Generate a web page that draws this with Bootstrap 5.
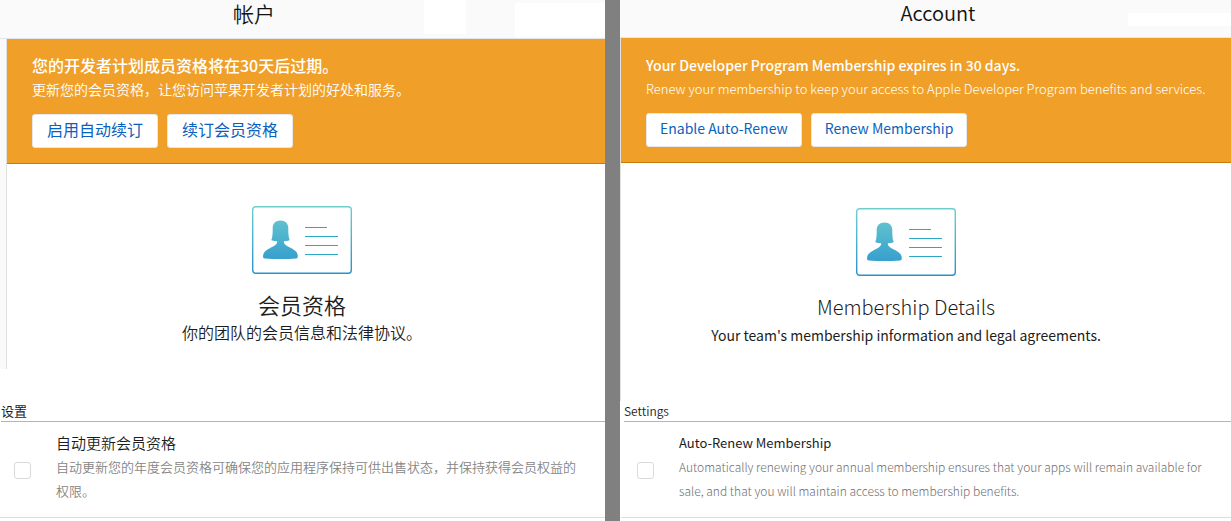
<!DOCTYPE html>
<html lang="zh-CN">
<head>
<meta charset="utf-8">
<meta name="viewport" content="width=device-width, initial-scale=1">
<title>帐户 / Account</title>
<link href="https://cdn.jsdelivr.net/npm/bootstrap@5.3.0/dist/css/bootstrap.min.css" rel="stylesheet">
<style>
  body { font-family: "Noto Sans CJK SC", sans-serif; color: #1c1c1c; background: #fff; }
  .panes { min-height: 100vh; }
  .pane { flex: 1 1 0; }
  .pane-zh { flex-grow: 605; }
  .pane-en { flex-grow: 611; }
  .divider { flex: 0 0 15px; background: #808080; }

  .topbar { height: 38px; background: #fafafa; border-bottom: 1px solid #e3e5e8; }
  .pane-zh .topbar { height: 39px; padding-right: 97px; }
  .pane-en .topbar { padding-left: 25px; }
  .topbar h1 { font-size: 21px; line-height: 26px; font-weight: 350; color: #111; }
  .pane-en .topbar h1 { font-size: 20px; }
  .blank { position: absolute; background: #fff; }
  .blank-a { right: 139px; top: 0; width: 42px; height: 34px; }
  .blank-b { right: 0; top: 3px; width: 90px; height: 34px; }
  .blank-c { right: 0; top: 13px; width: 103px; height: 13px; }

  .pane-zh .main-area { border-left: 1px solid #e0e0e0; margin-left: 6px; height: 330px; }
  .pane-zh .gutter { background: #fafafa; }
  .pane-en .main-area { border-left: 1px solid #e0e0e0; height: 363px; }
  .notice { background: #f0a028; border-bottom: 1px solid #c47d0b; color: #fff; padding: 14px 25px; height: 125px; }
  .notice h2 { font-size: 16px; line-height: 24px; font-weight: 500; }
  .notice p { font-size: 14px; line-height: 24px; font-weight: 350; }
  .pane-en .notice h2 { font-size: 14px; line-height: 26px; }
  .pane-en .notice p { font-size: 13px; line-height: 22px; font-weight: 300; }
  .btn-notice { --bs-btn-color: #0a62bd; --bs-btn-bg: #fff; --bs-btn-border-color: #e6e6ee;
    --bs-btn-hover-color: #0a4f99; --bs-btn-hover-bg: #f4f8fc; --bs-btn-border-radius: 3px;
    --bs-btn-font-size: 16px; --bs-btn-line-height: 24px; --bs-btn-padding-x: 14px; --bs-btn-padding-y: 2px;
    height: 34px; display: flex; align-items: flex-start; }
  .pane-en .btn-notice { --bs-btn-font-size: 14px; --bs-btn-padding-x: 13px; }
  .actions { gap: 9px; margin-top: 13px; }

  .member { padding-top: 42px; }
  .pane-zh .member { padding-right: 8px; }
  .pane-en .member { padding-top: 45px; padding-right: 40px; }
  .member h3 { font-size: 22px; line-height: 30px; font-weight: 350; margin: 15px 0 0; }
  .member p { font-size: 16px; line-height: 26px; font-weight: 350; }
  .pane-en .member h3 { font-size: 20px; line-height: 32px; font-weight: 300; }
  .pane-en .member p { font-size: 14px; line-height: 24px; font-weight: 400; }

  .settings h4 { font-size: 13px; line-height: 20px; font-weight: 400; border-bottom: 1px solid #b5b5b5; }
  .pane-zh .settings { padding-top: 32px; }
  .pane-zh .settings h4 { margin-left: 1px; }
  .pane-en .settings h4 { margin-left: 4px; font-size: 12px; font-weight: 350; }
  .pane-en .setting-row { margin-left: 1px; }
  .setting-row { gap: 25px; padding: 9px 24px 14px 14px; border-bottom: 1px solid #dcdcdc; }
  .pane-en .setting-row { padding-left: 16px; }
  .setting-row .form-check-input { width: 17px; height: 17px; border-color: #dadada; border-radius: 3px; margin: 6px 0 0; }
  .setting-row label { font-size: 15px; line-height: 24px; font-weight: 350; }
  .setting-row p { font-size: 13px; line-height: 24px; font-weight: 350; color: #858585; }
  .pane-en .setting-row label { font-size: 13px; font-weight: 400; }
  .pane-en .setting-row p { font-size: 12px; font-weight: 300; color: #707070; }
</style>
</head>
<body>
<svg width="0" height="0" class="position-absolute" aria-hidden="true">
  <defs>
    <linearGradient id="teal" gradientUnits="userSpaceOnUse" x1="0" y1="0" x2="0" y2="68">
      <stop offset="0" stop-color="#6fcfcf"/><stop offset="1" stop-color="#2792cc"/>
    </linearGradient>
    <symbol id="member-card" viewBox="0 0 100 68">
      <rect x="0.7" y="0.7" width="98.6" height="66.6" rx="3" fill="none" stroke="url(#teal)" stroke-width="1.4"/>
      <path fill="url(#teal)" d="M28.500 14.500C33.500 14.500 36.300 17.500 36.300 22C36.300 27 36.300 30.500 37.700 34.300C35.800 35 33.800 35.200 31.900 35.200V36.800C33.500 40.300 39 41.500 42.500 44.200C45.300 46.300 46 48.500 45.700 51C45.600 52 45.200 52.300 44.300 52.400C34 53.200 23 53.200 12.700 52.400C11.600 52.300 11.200 52 11.100 51C10.900 48.300 11.700 46.200 14.500 44.200C18 41.600 23.500 40.300 25.100 36.800V35.200C23.200 35.200 21.200 35 19.300 34.300C20.700 30.500 20.700 27 20.700 22C20.700 17.500 23.500 14.500 28.500 14.500Z"/>
      <path fill="none" stroke="#2aa7c4" stroke-width="1.2" stroke-linecap="round" d="M53.500 21.500H74.500M53.500 30.500H85.500M53.500 39.500H85.500M53.500 48.500H85.500"/>
    </symbol>
  </defs>
</svg>
<div class="panes d-flex">
  <section class="pane pane-zh" lang="zh-CN">
    <header class="topbar position-relative text-center">
      <h1 class="m-0">帐户</h1>
      <span class="blank blank-a"></span><span class="blank blank-b"></span>
    </header>
    <div class="gutter">
      <div class="main-area bg-white">
        <div class="notice">
          <h2 class="m-0">您的开发者计划成员资格将在30天后过期。</h2>
          <p class="m-0">更新您的会员资格，让您访问苹果开发者计划的好处和服务。</p>
          <div class="actions d-flex">
            <button type="button" class="btn btn-notice">启用自动续订</button>
            <button type="button" class="btn btn-notice">续订会员资格</button>
          </div>
        </div>
        <div class="member text-center">
          <svg class="d-block mx-auto" width="100" height="68" aria-hidden="true"><use href="#member-card"/></svg>
          <h3>会员资格</h3>
          <p class="m-0">你的团队的会员信息和法律协议。</p>
        </div>
      </div>
    </div>
    <div class="settings">
      <h4 class="mb-0">设置</h4>
      <div class="setting-row d-flex align-items-center">
        <input class="form-check-input flex-shrink-0" type="checkbox" id="renew-zh">
        <div>
          <label class="d-block" for="renew-zh">自动更新会员资格</label>
          <p class="m-0">自动更新您的年度会员资格可确保您的应用程序保持可供出售状态，并保持获得会员权益的权限。</p>
        </div>
      </div>
    </div>
  </section>
  <div class="divider"></div>
  <section class="pane pane-en" lang="en">
    <header class="topbar position-relative text-center">
      <h1 class="m-0">Account</h1>
      <span class="blank blank-c"></span>
    </header>
    <div class="main-area">
      <div class="notice">
        <h2 class="m-0">Your Developer Program Membership expires in 30 days.</h2>
        <p class="m-0">Renew your membership to keep your access to Apple Developer Program benefits and services.</p>
        <div class="actions d-flex">
          <button type="button" class="btn btn-notice">Enable Auto-Renew</button>
          <button type="button" class="btn btn-notice">Renew Membership</button>
        </div>
      </div>
      <div class="member text-center">
        <svg class="d-block mx-auto" width="100" height="68" aria-hidden="true"><use href="#member-card"/></svg>
        <h3>Membership Details</h3>
        <p class="m-0">Your team's membership information and legal agreements.</p>
      </div>
    </div>
    <div class="settings">
      <h4 class="mb-0">Settings</h4>
      <div class="setting-row d-flex align-items-center">
        <input class="form-check-input flex-shrink-0" type="checkbox" id="renew-en">
        <div>
          <label class="d-block" for="renew-en">Auto-Renew Membership</label>
          <p class="m-0">Automatically renewing your annual membership ensures that your apps will remain available for sale, and that you will maintain access to membership benefits.</p>
        </div>
      </div>
    </div>
  </section>
</div>
<script src="https://cdn.jsdelivr.net/npm/bootstrap@5.3.0/dist/js/bootstrap.bundle.min.js"></script>
</body>
</html>
